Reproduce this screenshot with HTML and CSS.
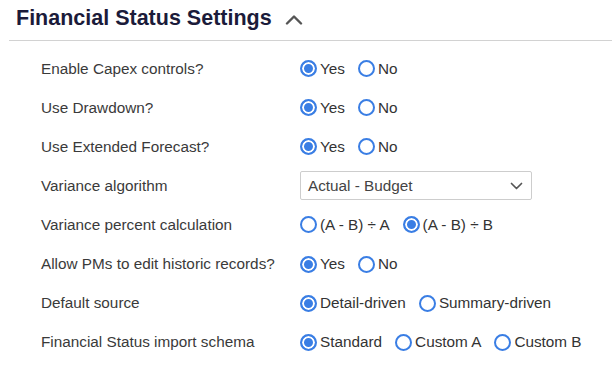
FILE: index.html
```html
<!DOCTYPE html>
<html lang="en">

<head>
    <meta charset="UTF-8">
    <meta name="viewport" content="width=device-width, initial-scale=1.0">
    <title>Financial Status Settings</title>
    <link rel="stylesheet" href="styles.css">
</head>

<body>
    <div class="section">
        <div class="section-header">
            <h2>Financial Status Settings</h2>
            <svg class="chevron-up" width="18" height="11" viewBox="0 0 18 11">
                <path d="M2 9.5 L9 2.5 L16 9.5" fill="none" stroke="#555" stroke-width="2.4" stroke-linecap="round" stroke-linejoin="round"/>
            </svg>
        </div>

        <div class="settings">
            <div class="setting-row">
                <span class="setting-label">Enable Capex controls?</span>
                <div class="radio-group">
                    <label class="radio-option"><span class="radio checked"></span>Yes</label>
                    <label class="radio-option"><span class="radio"></span>No</label>
                </div>
            </div>
            <div class="setting-row">
                <span class="setting-label">Use Drawdown?</span>
                <div class="radio-group">
                    <label class="radio-option"><span class="radio checked"></span>Yes</label>
                    <label class="radio-option"><span class="radio"></span>No</label>
                </div>
            </div>
            <div class="setting-row">
                <span class="setting-label">Use Extended Forecast?</span>
                <div class="radio-group">
                    <label class="radio-option"><span class="radio checked"></span>Yes</label>
                    <label class="radio-option"><span class="radio"></span>No</label>
                </div>
            </div>
            <div class="setting-row">
                <span class="setting-label">Variance algorithm</span>
                <div class="select-box">
                    <span>Actual - Budget</span>
                    <svg width="13" height="8" viewBox="0 0 13 8">
                        <path d="M1.5 1.5 L6.5 6.5 L11.5 1.5" fill="none" stroke="#555" stroke-width="1.7" stroke-linecap="round" stroke-linejoin="round"/>
                    </svg>
                </div>
            </div>
            <div class="setting-row">
                <span class="setting-label">Variance percent calculation</span>
                <div class="radio-group">
                    <label class="radio-option"><span class="radio"></span>(A - B) ÷ A</label>
                    <label class="radio-option"><span class="radio checked"></span>(A - B) ÷ B</label>
                </div>
            </div>
            <div class="setting-row">
                <span class="setting-label">Allow PMs to edit historic records?</span>
                <div class="radio-group">
                    <label class="radio-option"><span class="radio checked"></span>Yes</label>
                    <label class="radio-option"><span class="radio"></span>No</label>
                </div>
            </div>
            <div class="setting-row">
                <span class="setting-label">Default source</span>
                <div class="radio-group">
                    <label class="radio-option"><span class="radio checked"></span>Detail-driven</label>
                    <label class="radio-option"><span class="radio"></span>Summary-driven</label>
                </div>
            </div>
            <div class="setting-row">
                <span class="setting-label">Financial Status import schema</span>
                <div class="radio-group">
                    <label class="radio-option"><span class="radio checked"></span>Standard</label>
                    <label class="radio-option"><span class="radio"></span>Custom A</label>
                    <label class="radio-option"><span class="radio"></span>Custom B</label>
                </div>
            </div>
        </div>
    </div>
</body>

</html>
```

FILE: styles.css
```css
:root {
    --blue: #3a7ee4;
    --text: #3a3a3a;
    --heading: #1b1b3a;
    --line: #d2d2d2;
}

* {
    margin: 0;
    padding: 0;
    box-sizing: border-box;
}

body {
    background: #fff;
    color: var(--text);
    font-family: 'Liberation Sans', Arial, sans-serif;
}

.section {
    padding-left: 9px;
}

.section-header {
    display: flex;
    align-items: center;
    height: 41px;
    padding: 0 0 3px 7px;
    border-bottom: 1px solid var(--line);
}

h2 {
    font-size: 21.5px;
    font-weight: 700;
    color: var(--heading);
}

.chevron-up {
    margin-left: 13px;
    margin-top: 1px;
}

.settings {
    padding: 8px 0 0 32px;
}

.setting-row {
    display: grid;
    grid-template-columns: 259px 1fr;
    align-items: center;
    height: 39.1px;
    font-size: 15.3px;
}

.radio-group {
    display: flex;
    align-items: center;
    gap: 13px;
}

.radio-option {
    display: flex;
    align-items: center;
    gap: 3px;
    color: #333;
}

/* radio circles drawn by hand */
.radio {
    width: 17px;
    height: 17px;
    border: 2px solid var(--blue);
    border-radius: 50%;
    background: #fff;
}

.radio.checked {
    background: var(--blue);
    box-shadow: inset 0 0 0 2px #fff;
}

.select-box {
    width: 232px;
    height: 29px;
    display: flex;
    align-items: center;
    justify-content: space-between;
    padding: 0 8px 0 7px;
    border: 1px solid #cdcdcd;
    border-radius: 2px;
    color: #444;
}
```
